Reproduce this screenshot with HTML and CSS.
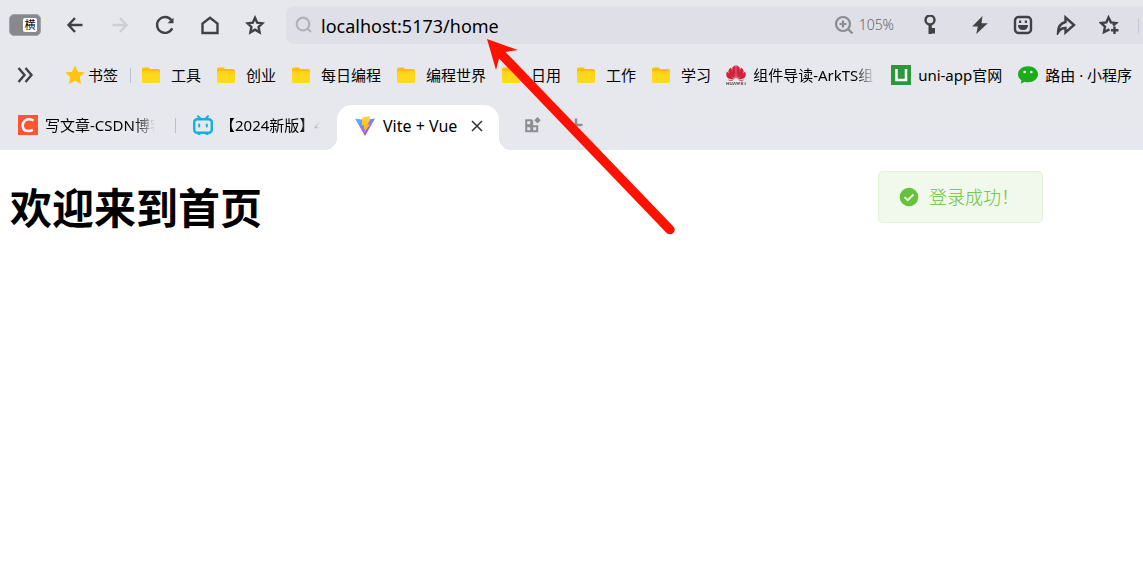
FILE: index.html
```html
<!DOCTYPE html>
<html lang="zh-CN">
<head>
<meta charset="utf-8">
<meta name="viewport" content="width=device-width, initial-scale=1">
<title>Vite + Vue</title>
<link rel="stylesheet" href="styles.css">
</head>
<body>
<svg class="sprite" aria-hidden="true">
  <defs>
    <linearGradient id="folder-fill" x1="0" y1="0" x2="0" y2="1"><stop offset="0" stop-color="#ffcf12"/><stop offset=".4" stop-color="#ffd91c"/></linearGradient>
    <symbol id="folder" viewBox="0 0 20 20">
      <path d="M1 4.500q0-2 2-2h4.500l1.500 1.500h8q2 0 2 2v4H1z" fill="#ffbd05"/>
      <rect x="1" y="6" width="18" height="12" rx="1.500" fill="url(#folder-fill)"/>
    </symbol>
  </defs>
</svg>

<header class="chrome">
  <div class="toolbar">
    <button class="mode" type="button" aria-label="切换模式"><span class="mode-knob">横</span></button>
    <div class="nav-buttons">
      <button class="icon-btn" type="button" aria-label="后退"><svg viewBox="0 0 20 20"><path d="M17.500 10H3.500M10 3l-6.500 7 6.500 7" class="line"/></svg></button>
      <button class="icon-btn faded" type="button" aria-label="前进"><svg viewBox="0 0 20 20"><path d="M2.500 10h14M10 3l6.500 7-6.500 7" class="line"/></svg></button>
      <button class="icon-btn" type="button" aria-label="刷新"><svg viewBox="0 0 20 20"><path d="M17.200 13.200A7.900 7.900 0 1 1 16.300 5.200" class="line"/><path d="M18.500 2.800v5.400h-6z" class="solid"/></svg></button>
      <button class="icon-btn" type="button" aria-label="主页"><svg viewBox="0 0 20 20"><path d="M2.500 18V8.500L10 2.800l7.500 5.700V18z" class="line"/></svg></button>
      <button class="icon-btn" type="button" aria-label="收藏"><svg viewBox="0 0 20 20"><path d="M10 2.800l2.200 4.900 5.200.6-3.800 3.600 1 5.400L10 14.600l-4.600 2.700 1-5.400-3.800-3.600 5.200-.6z" class="line"/></svg></button>
    </div>
    <form class="address">
      <svg class="search-icon" viewBox="0 0 18 18" aria-hidden="true"><circle cx="8" cy="8" r="6.300"/><path d="M12.500 12.500l3.500 3.500"/></svg>
      <input class="url" type="text" aria-label="地址" value="localhost:5173/home">
      <button class="zoom" type="button"><svg viewBox="0 0 20 20" aria-hidden="true"><circle cx="9" cy="9" r="7"/><path d="M14 14l4.500 4.500M5.500 9h7M9 5.500v7"/></svg><span>105%</span></button>
      <div class="actions">
        <button class="icon-btn key" type="button" aria-label="密码"><svg viewBox="0 0 20 20"><circle cx="10" cy="5" r="4.500" class="line"/><path d="M8.500 9h3.300v4H15v5.500h-3.200V19H8.500z" class="solid"/></svg></button>
        <button class="icon-btn" type="button" aria-label="加速"><svg viewBox="0 0 20 20"><path d="M12.500 1L2.200 11.500h5.600L6.300 19 17.800 8.300h-6.300z" class="solid"/></svg></button>
        <button class="icon-btn" type="button" aria-label="表情"><svg viewBox="0 0 20 20"><rect x="2" y="2" width="16" height="16" rx="3.500" class="line"/><path d="M6 5.500h2.200V8H6zM11.800 5.500H14V8h-2.200zM5 10h10q0 5-5 5t-5-5z" class="solid"/></svg></button>
        <button class="icon-btn" type="button" aria-label="分享"><svg viewBox="0 0 20 20"><path d="M9.500 2.500l8.500 7.500-8.500 7.500v-4.500Q4.500 13 2 17.500 2 9 9.500 7z" class="line"/></svg></button>
        <button class="icon-btn" type="button" aria-label="添加收藏"><svg viewBox="0 0 20 20"><path d="M10.500 14.300L5 17l1-5.300L2 8l5.300-.6L9.500 2.500l2.400 4.900L17 8l-3 2.500" class="line"/><path d="M15.500 11.500v7.500M12 15.200h7.500" class="line"/></svg></button>
        <span class="end-rule"></span>
      </div>
    </form>
  </div>

  <nav class="bookmarks" aria-label="书签栏">
    <button class="icon-btn expand" type="button" aria-label="展开"><svg viewBox="0 0 20 20"><path d="M3.500 3l6 7-6 7M10.500 3l6 7-6 7" class="line"/></svg></button>
    <a class="mark star" href="#"><svg viewBox="0 0 20 20"><path d="M10 .5l2.900 6.200 6.800.9-5 4.700 1.300 6.700-6-3.200L4 19l1.300-6.700-5-4.700 6.800-.9z" fill="#ffc414"/></svg><span>书签</span></a>
    <span class="rule"></span>
    <a class="mark folder" href="#"><svg><use href="#folder"/></svg><span>工具</span></a>
    <a class="mark folder" href="#"><svg><use href="#folder"/></svg><span>创业</span></a>
    <a class="mark folder" href="#"><svg><use href="#folder"/></svg><span>每日编程</span></a>
    <a class="mark folder" href="#"><svg><use href="#folder"/></svg><span>编程世界</span></a>
    <a class="mark folder" href="#"><svg><use href="#folder"/></svg><span>日用</span></a>
    <a class="mark folder" href="#"><svg><use href="#folder"/></svg><span>工作</span></a>
    <a class="mark folder" href="#"><svg><use href="#folder"/></svg><span>学习</span></a>
    <a class="mark site" href="#"><svg viewBox="0 0 20 20"><g fill="#d2233c"><path d="M9.700 13.500Q5 7 6.500 2.500 8 .8 9.700 .3 10 7 9.700 13.500z"/><path d="M10.300 13.500Q15 7 13.500 2.500 12 .8 10.300 .3 10 7 10.300 13.500z"/><path d="M9 13.800Q2 10 2.300 6 3 3.800 5 2.400 8 8 9 13.800z"/><path d="M11 13.800Q18 10 17.700 6 17 3.800 15 2.400 12 8 11 13.800z"/><path d="M8.200 14.600Q1 14.400 .3 10.500 0 8.300 .9 6.500 5.500 10 8.200 14.600z"/><path d="M11.800 14.600Q19 14.400 19.700 10.500 20 8.300 19.100 6.500 14.500 10 11.800 14.600z"/><path d="M7.500 15.200Q4 16.500 1.600 14.700 4 14.500 7.500 15.200zM12.500 15.200Q16 16.500 18.400 14.700 16 14.500 12.500 15.200z"/></g><path d="M.7 17v3M2.700 17v3M.7 18.500h2M4.200 17v2.500h2V17M7.300 20l1.200-3 1.200 3M10.500 17l.8 2.500.8-2 .8 2 .8-2.500M17.300 17.300h-2v2.400h2M15.300 18.500h1.700M19.200 17v3" fill="none" stroke="#555" stroke-width=".8"/></svg><span class="fade ark">组件导读-ArkTS组</span></a>
    <a class="mark site" href="#"><svg viewBox="0 0 20 20"><path d="M0 0h20v20H0z" fill="#2b9939"/><path d="M5.500 4v11h9.500V4" fill="none" stroke="#fff" stroke-width="2.500"/></svg><span>uni-app官网</span></a>
    <a class="mark site" href="#"><svg viewBox="0 0 20 20"><path d="M10 1.200c5.500 0 10 3.500 10 8s-4.500 8-10 8q-1.800 0-3.400-.5L2.800 18.800l.6-3.500Q0 13 0 9.200c0-4.500 4.500-8 10-8z" fill="#1aad19"/><circle cx="6.700" cy="7" r="1.300" fill="#fff"/><circle cx="13.300" cy="7" r="1.300" fill="#fff"/></svg><span>路由 · 小程序</span></a>
  </nav>

  <div class="tabs">
    <button class="tab" type="button"><svg viewBox="0 0 20 20"><path d="M0 0h20v20H0z" fill="#fc5531"/><path d="M15.500 5.500Q13 3.800 10 4.300 5 5.300 4.700 10.500 4.700 16 10.200 16 12.500 16 14.800 14.800" fill="none" stroke="#fff" stroke-width="2.500"/></svg><span class="fade">写文章-CSDN博客</span></button>
    <span class="rule"></span>
    <button class="tab" type="button"><svg viewBox="0 0 20 20"><g fill="none" stroke="#12b0e3" stroke-linecap="round"><rect x="1.200" y="4.200" width="17.600" height="13.600" rx="3" stroke-width="2.400"/><path d="M5 1.200l2.500 2.500M15 1.200l-2.500 2.500M5.500 19h1M13.500 19h1" stroke-width="2"/><path d="M6.200 9.500v2M13.800 9.500v2" stroke-width="2"/></g></svg><span class="fade video">【2024新版】4小时</span></button>
    <div class="tab active">
      <svg viewBox="0 0 20 20" aria-hidden="true"><defs><linearGradient id="vite-a" x1="0" y1="0" x2=".6" y2="1"><stop offset="0" stop-color="#41c8ff"/><stop offset="1" stop-color="#b33bfa"/></linearGradient><linearGradient id="vite-b" x1="0" y1="0" x2="0" y2="1"><stop offset="0" stop-color="#ffd83c"/><stop offset="1" stop-color="#ffa800"/></linearGradient></defs><path d="M0 2.500l10 1.500 10-1.500L10 20z" fill="url(#vite-a)"/><path d="M14.800 0L7.300 1.500 6.600 9.500l2.500-.5-.8 4.200 1.700-.5L8.800 17.500 15 8.200l-2.700.5 2.500-4.200z" fill="url(#vite-b)"/></svg>
      <span>Vite + Vue</span>
      <button class="close" type="button" aria-label="关闭"><svg viewBox="0 0 12 12"><path d="M1 1l10 10M11 1L1 11"/></svg></button>
    </div>
    <button class="tab-tool" type="button" aria-label="标签组"><svg viewBox="0 0 16 16"><path d="M1.200 3.200h5v5h-5zM1.200 9.200h5v5h-5zM7.200 9.200h5v5h-5zM7.200 9.200v-6" fill="none" stroke="#8e8e92" stroke-width="2"/><path d="M12.500 0l3.200 3.200-3.200 3.200-3.200-3.200z" fill="#8e8e92"/></svg></button>
    <button class="tab-tool" type="button" aria-label="新建标签页"><svg viewBox="0 0 16 16"><path d="M8 1.500v13M1.500 8h13" fill="none" stroke="#8e8e92" stroke-width="2.500"/></svg></button>
  </div>
</header>

<main class="page">
  <h1>欢迎来到首页</h1>
  <div class="toast" role="alert">
    <svg viewBox="0 0 20 20" aria-hidden="true"><circle cx="10" cy="10" r="9.300" fill="#67c23a"/><path d="M5.500 10.200l3.200 3 5.800-5.700" fill="none" stroke="#f0f9eb" stroke-width="1.800"/></svg>
    <span>登录成功！</span>
  </div>
</main>

<svg class="pointer" viewBox="0 0 190 198" aria-hidden="true"><path d="M1 1l31 11-12.500 2L187.400 188.400a4.700 4.700 0 0 1-6.800 6.500L13 20.500 10 32z" fill="#ff1100"/></svg>
</body>
</html>
```
FILE: styles.css
```css
* { box-sizing: border-box; }

body {
  margin: 0;
  background: #fff;
  color: #000;
  font: 15px/20px "Noto Sans", "Noto Sans CJK SC", sans-serif;
}

button, input {
  margin: 0;
  padding: 0;
  border: 0;
  background: none;
  color: inherit;
  font: inherit;
}

a { color: inherit; text-decoration: none; }
svg { display: block; flex: none; }
.sprite { position: absolute; width: 0; height: 0; }

.chrome { background: #e7e8ed; overflow: hidden; }

.line { fill: none; stroke: #404145; stroke-width: 2.4; }
.solid { fill: #404145; }
.icon-btn { flex: none; width: 20px; height: 20px; }
.icon-btn svg { width: 20px; height: 20px; }
.faded { opacity: .15; }

.toolbar { display: flex; align-items: center; height: 50px; padding-left: 9px; }

.mode {
  display: flex;
  align-items: center;
  justify-content: flex-end;
  flex: none;
  width: 32px;
  height: 22px;
  padding: 3px;
  border: 1px solid #a2a3a6;
  border-radius: 5px;
  background: #88898c;
}
.mode-knob {
  width: 14px;
  height: 14px;
  border-radius: 2px;
  background: #fff;
  font-size: 11px;
  line-height: 14px;
  text-align: center;
}

.nav-buttons { display: flex; gap: 25px; padding: 0 21px 0 24px; }

.address {
  display: flex;
  flex: 1;
  align-items: center;
  min-width: 0;
  height: 38px;
  padding-left: 9px;
  border-radius: 8px 0 0 8px;
  background: #dfdfe7;
}
.search-icon { width: 18px; height: 18px; fill: none; stroke: #b2b2b9; stroke-width: 2.2; }
.url { flex: 1; min-width: 0; padding: 2px 0 0 8px; font-size: 18px; line-height: 26px; outline: 0; }

.zoom { display: flex; align-items: center; gap: 5px; color: #66676b; font-size: 14px; font-weight: 300; }
.zoom svg { width: 20px; height: 20px; fill: none; stroke: #8b8b90; stroke-width: 2.2; }
.actions { display: flex; align-items: center; gap: 23px; padding: 0 4px 0 26px; }
.key { margin-right: 7px; }
.end-rule { width: 1px; height: 15px; margin-left: -4px; background: #c5c8d6; }

.bookmarks { display: flex; align-items: center; height: 50px; padding-left: 15px; white-space: nowrap; }
.expand { margin-right: 30px; }
.mark { display: flex; align-items: center; flex: none; margin-right: 15px; }
.mark svg { width: 20px; height: 20px; }
.folder { gap: 10px; }
.site { gap: 7px; margin-right: 16px; }
.star { gap: 3px; margin-right: 12px; }
.rule { flex: none; width: 1px; height: 15px; background: #b9bfcd; }
.bookmarks .rule { margin-right: 10px; }

.fade {
  overflow: hidden;
  width: 110px;
  text-align: left;
  white-space: nowrap;
  -webkit-mask-image: linear-gradient(to left, transparent, #000 20px);
  mask-image: linear-gradient(to left, transparent, #000 20px);
}
.ark { width: 122px; }

.tabs { display: flex; align-items: center; height: 50px; padding-left: 18px; }
.tab { display: flex; align-items: center; flex: none; gap: 7px; margin-right: 20px; white-space: nowrap; }
.tab svg { width: 20px; height: 20px; }
.tabs .rule { margin-right: 17px; }
.video { width: 100px; margin-right: 10px; }

.active {
  position: relative;
  align-self: flex-end;
  height: 45px;
  margin: 0 26px 0 -13px;
  padding: 0 16px 4px 18px;
  gap: 8px;
  border-radius: 15px 15px 0 0;
  background: #fff;
  font-size: 16px;
}
.active::before, .active::after {
  content: "";
  position: absolute;
  bottom: 0;
  width: 12px;
  height: 12px;
}
.active::before { right: 100%; background: radial-gradient(circle at 0 0, transparent 12px, #fff 12px); }
.active::after { left: 100%; background: radial-gradient(circle at 100% 0, transparent 12px, #fff 12px); }
.close { margin-left: 6px; }
.tab .close svg { width: 12px; height: 12px; fill: none; stroke: #303030; stroke-width: 1.5; }
.tab-tool { flex: none; margin-right: 27px; }
.tab-tool svg { width: 16px; height: 16px; }

.page { position: relative; padding: 28px 10px; }
h1 { margin: 0; font-size: 42px; line-height: 60px; font-weight: 700; }

.toast {
  position: absolute;
  top: 21px;
  right: 100px;
  display: flex;
  align-items: center;
  gap: 10px;
  height: 52px;
  padding: 0 23px 0 20px;
  border: 1px solid #e1f3d8;
  border-radius: 5px;
  background: #f0f9eb;
  color: #67c23a;
  font-size: 18px;
  font-weight: 300;
  line-height: 24px;
}
.toast svg { width: 20px; height: 20px; }

.pointer { position: absolute; top: 38px; left: 486px; width: 190px; height: 198px; pointer-events: none; }
```
